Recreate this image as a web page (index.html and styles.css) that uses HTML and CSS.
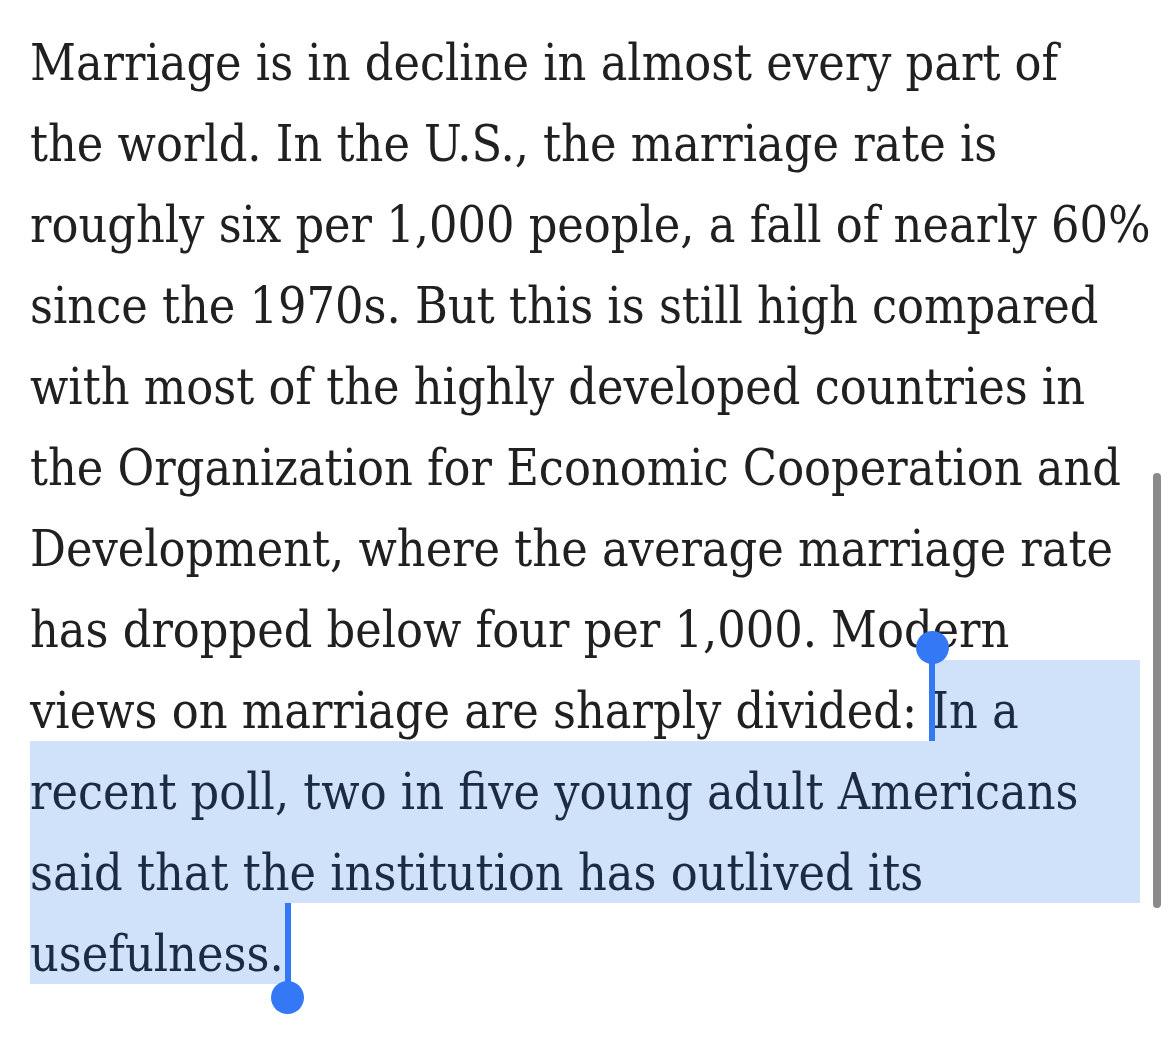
FILE: index.html
```html
<!DOCTYPE html>
<html lang="en">
<head>
<meta charset="utf-8">
<title>Marriage</title>
<link rel="stylesheet" href="styles.css">
</head>
<body>
<main class="page">
  <div class="article">
    <div class="line">Marriage is in decline in almost every part of</div>
    <div class="line">the world. In the U.S., the marriage rate is</div>
    <div class="line">roughly six per 1,000 people, a fall of nearly 60%</div>
    <div class="line">since the 1970s. But this is still high compared</div>
    <div class="line">with most of the highly developed countries in</div>
    <div class="line">the Organization for Economic Cooperation and</div>
    <div class="line">Development, where the average marriage rate</div>
    <div class="line">has dropped below four per 1,000. Modern</div>
    <div class="line"><span class="plain">views on marriage are sharply divided:&nbsp;</span><span class="sel sel-start"><span class="handle handle-start"></span>In a</span></div>
    <div class="line sel-full">recent poll, two in five young adult Americans</div>
    <div class="line sel-full">said that the institution has outlived its</div>
    <div class="line"><span class="sel sel-end">usefulness.<span class="handle handle-end"></span></span></div>
  </div>
  <div class="scrollbar"></div>
</main>
</body>
</html>
```
FILE: styles.css
```css
html, body {
  margin: 0;
  padding: 0;
  background: #ffffff;
}
.page {
  position: relative;
  width: 1170px;
  height: 1041px;
  overflow: hidden;
}
.article {
  padding: 12px 30px 0 30px;
  width: 1110px;
  font-family: "DejaVu Serif Condensed", "DejaVu Serif", serif;
  font-stretch: condensed;
  font-size: 49.8px;
  color: #202020;
}
.line {
  display: flex;
  height: 81px;
  box-sizing: border-box;
  padding-top: 21px;
  line-height: 60px;
  white-space: nowrap;
}
.sel-full {
  background: #cfe2f9;
  color: #1c2b44;
}
.sel {
  position: relative;
  background: #cfe2f9;
  color: #1c2b44;
  margin-top: -21px;
  padding-top: 21px;
  height: 81px;
  box-sizing: border-box;
}
.sel-start {
  flex: 1;
}
.sel-end {
  padding-right: 4px;
}
.handle {
  position: absolute;
  width: 6px;
  background: #3478f6;
}
.handle::after {
  content: "";
  position: absolute;
  left: -13.5px;
  width: 33px;
  height: 33px;
  border-radius: 50%;
  background: #3478f6;
}
.handle-start {
  left: -2px;
  top: -13px;
  height: 94px;
}
.handle-start::after {
  top: -16.5px;
}
.handle-end {
  right: -3px;
  top: 0;
  height: 94px;
}
.handle-end::after {
  bottom: -16.5px;
}
.scrollbar {
  position: absolute;
  left: 1153px;
  top: 473px;
  width: 8px;
  height: 435px;
  border-radius: 4px;
  background: #8a8a8a;
}
```
